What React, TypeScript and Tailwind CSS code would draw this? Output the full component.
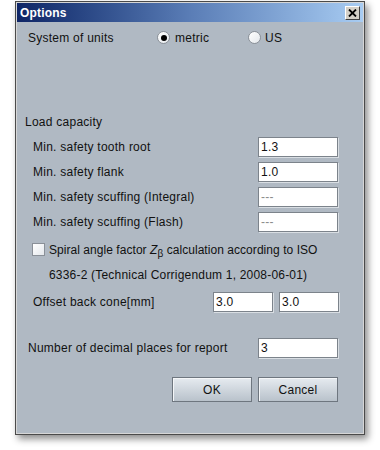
import React from "react";

const font = { fontFamily: '"Liberation Sans", Arial, sans-serif' };

const Field: React.FC<{ value: string; disabled?: boolean; w?: string }> = ({ value, disabled, w = "w-[80px]" }) => (
  <div
    className={`${w} h-[20px] bg-white border border-[#7c838b] shadow-[1px_1px_0_#d9dee3] flex items-center pl-[2px] text-[12px] ${
      disabled ? "text-[#8c8c8c]" : "text-[#111]"
    }`}
  >
    {value}
  </div>
);

const Radio: React.FC<{ checked?: boolean }> = ({ checked }) => (
  <div className="w-[13px] h-[13px] rounded-full border border-[#8a9098] bg-gradient-to-br from-white to-[#e4e8ec] flex items-center justify-center">
    {checked && <div className="w-[6px] h-[6px] rounded-full bg-black" />}
  </div>
);

const Button: React.FC<{ label: string }> = ({ label }) => (
  <div className="w-[80px] h-[25px] border border-[#6e767f] shadow-[inset_1px_1px_0_#f4f6f8] bg-gradient-to-b from-[#e6ebf0] to-[#b9c2cb] flex items-center justify-center text-[12px] text-[#111]">
    {label}
  </div>
);

const Row: React.FC<{ className?: string; children: React.ReactNode }> = ({ className = "", children }) => (
  <div className={`h-[25px] flex items-center ${className}`}>{children}</div>
);

export default function App() {
  return (
    <div className="w-[380px] h-[450px] bg-white pl-[15px] pt-[1px]" style={font}>
      <div className="w-[350px] h-[434px] border border-[#4a4a4a] shadow-[3px_4px_7px_rgba(0,0,0,0.45)] flex flex-col">
        <div className="flex-1 border border-[#d6d6d6] flex flex-col">
          {/* Title bar */}
          <div className="h-[19px] bg-gradient-to-r from-[#0f2566] via-[#5a7db6] to-[#a8ccf2] flex items-center pl-[3px] pr-[3px]">
            <span className="text-white font-bold text-[12px] tracking-[0.2px]">Options</span>
            <div className="ml-auto w-[15px] h-[14px] bg-[#d4d0c8] border border-t-white border-l-white border-b-[#404040] border-r-[#404040] flex items-center justify-center">
              <svg width="9" height="8" viewBox="0 0 9 8">
                <path d="M1 0.5 L8 7.5 M8 0.5 L1 7.5" stroke="#000" strokeWidth="1.8" />
              </svg>
            </div>
          </div>

          {/* Body */}
          <div className="flex-1 bg-[#b0b9c3] pt-[3px] pr-[25px] text-[12px] tracking-[0.25px] text-[#111] flex flex-col">
            <Row className="pl-[11px]">
              <span className="w-[129px]">System of units</span>
              <Radio checked />
              <span className="ml-[5px] w-[73px]">metric</span>
              <Radio />
              <span className="ml-[4px]">US</span>
            </Row>

            <div className="h-[59px]" />

            <Row className="pl-[8px]">Load capacity</Row>
            <Row className="pl-[16px]">
              <span>Min. safety tooth root</span>
              <div className="ml-auto"><Field value="1.3" /></div>
            </Row>
            <Row className="pl-[16px]">
              <span>Min. safety flank</span>
              <div className="ml-auto"><Field value="1.0" /></div>
            </Row>
            <Row className="pl-[16px]">
              <span>Min. safety scuffing (Integral)</span>
              <div className="ml-auto"><Field value="---" disabled /></div>
            </Row>
            <Row className="pl-[16px]">
              <span>Min. safety scuffing (Flash)</span>
              <div className="ml-auto"><Field value="---" disabled /></div>
            </Row>

            <div className="h-[3px]" />

            <Row className="pl-[15px]">
              <div className="w-[13px] h-[13px] border border-[#8a9098] bg-gradient-to-br from-white to-[#e4e8ec]" />
              <span className="ml-[4px] tracking-[0.05px]">
                Spiral angle factor <i>Z</i>
                <sub className="text-[10px] relative top-[3px]">β</sub> calculation according to ISO
              </span>
            </Row>
            <Row className="pl-[32px] tracking-[0.2px]">6336-2 (Technical Corrigendum 1, 2008-06-01)</Row>

            <div className="h-[2px]" />

            <Row className="pl-[16px]">
              <span>Offset back cone[mm]</span>
              <div className="ml-auto flex gap-[6px] -mr-[1px]">
                <Field value="3.0" w="w-[60px]" />
                <Field value="3.0" w="w-[60px]" />
              </div>
            </Row>

            <div className="h-[21px]" />

            <Row className="pl-[11px]">
              <span>Number of decimal places for report</span>
              <div className="ml-auto"><Field value="3" /></div>
            </Row>

            <div className="h-[17px]" />

            <div className="flex justify-end gap-[6px]">
              <Button label="OK" />
              <Button label="Cancel" />
            </div>
          </div>
        </div>
      </div>
    </div>
  );
}
